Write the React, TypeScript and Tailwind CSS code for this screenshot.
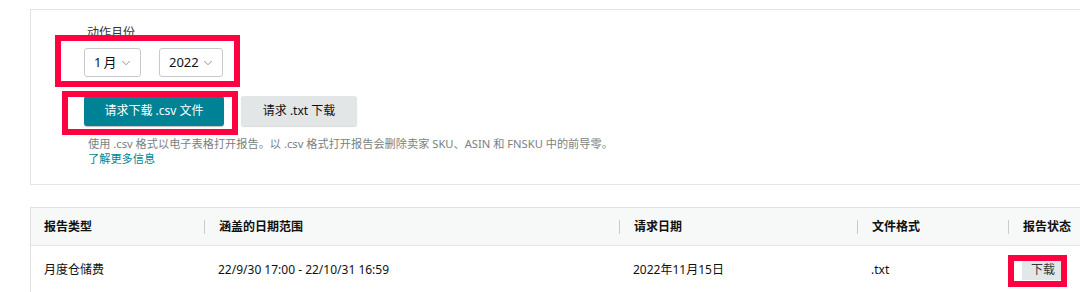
import { ChevronDown } from "lucide-react";

const font = { fontFamily: '"Noto Sans", "Noto Sans CJK SC", sans-serif' };

const Select = ({ value, width }: { value: string; width: string }) => (
  <div
    className={`${width} h-[29px] flex items-center justify-between pl-[9px] pr-[7px] border border-[#c5cbcf] rounded-[3px] bg-white text-[13px] text-[#0f1111]`}
  >
    <span>{value}</span>
    <ChevronDown className="w-[14px] h-[14px] text-[#7a7f7f]" strokeWidth={1.4} />
  </div>
);

const columns = [
  { title: "报告类型", cell: "月度仓储费" },
  { title: "涵盖的日期范围", cell: "22/9/30 17:00 - 22/10/31 16:59" },
  { title: "请求日期", cell: "2022年11月15日" },
  { title: "文件格式", cell: ".txt" },
  { title: "报告状态", cell: null },
];

const App = () => {
  return (
    <div className="relative w-full h-[292px] overflow-hidden bg-white text-[#0f1111]" style={font}>
      {/* Request card */}
      <div className="ml-[30px] mt-[9px] h-[176px] border-l border-t border-b border-[#e3e6e6] pt-[15px] pl-[53px]">
        <p className="ml-[3px] text-[12px] leading-[16px] text-[#333]">动作月份</p>
        <div className="flex gap-[18px] mt-[7px]">
          <Select value={"1\u2009月"} width="w-[57px]" />
          <Select value="2022" width="w-[64px]" />
        </div>
        <div className="flex gap-[17px] mt-[19px]">
          <button className="w-[140px] h-[30px] rounded-[3px] bg-[#008296] text-white text-[12px] shadow-[0_1px_1px_rgba(0,0,0,0.25)]">
            请求下载 .csv 文件
          </button>
          <button className="w-[116px] h-[30px] rounded-[3px] bg-[#e3e6e6] text-[#0f1111] text-[12px] shadow-[0_1px_1px_rgba(0,0,0,0.15)]">
            请求 .txt 下载
          </button>
        </div>
        <div className="mt-[10px] ml-[4px] text-[11.2px] leading-[15px]">
          <p className="text-[#7a7f7f]">
            使用 .csv 格式以电子表格打开报告。以 .csv 格式打开报告会删除卖家 SKU、ASIN 和 FNSKU 中的前导零。
          </p>
          <a href="#" className="text-[#008296]">了解更多信息</a>
        </div>
      </div>

      {/* Report table */}
      <div className="ml-[30px] mt-[22px] border-l border-t border-[#dfe2e2]">
        <div className="grid grid-cols-[173px_415px_238px_151px_1fr] h-[38px] bg-[#f7f8f8] border-b border-[#e3e6e6]">
          {columns.map((c, i) => (
            <div key={c.title} className="flex items-center">
              {i > 0 && <span className="w-px h-[14px] bg-[#c9cccc]" />}
              <span className={`${i > 0 ? "ml-[14px]" : "ml-[13px]"} text-[12px] font-bold`}>{c.title}</span>
            </div>
          ))}
        </div>
        <div className="grid grid-cols-[173px_415px_238px_151px_1fr] h-[48px] text-[12px]">
          {columns.map((c, i) => (
            <div key={c.title} className={`flex items-center ${i > 0 ? "pl-[14px]" : "pl-[13px]"}`}>
              {c.cell ?? (
                <button className="w-[42px] h-[20px] bg-[#e2e8e8] text-[12px] text-[#33393a]">下载</button>
              )}
            </div>
          ))}
        </div>
      </div>

      {/* Annotation boxes */}
      <div className="absolute left-[55px] top-[35px] w-[185px] h-[52px] border-[6px] border-[#ff0040]" />
      <div className="absolute left-[62px] top-[91px] w-[176px] h-[44px] border-[6px] border-[#ff0040]" />
      <div className="absolute left-[1008px] top-[255px] w-[59px] h-[32px] border-[6px] border-[#ff0040]" />
    </div>
  );
};

export default App;
